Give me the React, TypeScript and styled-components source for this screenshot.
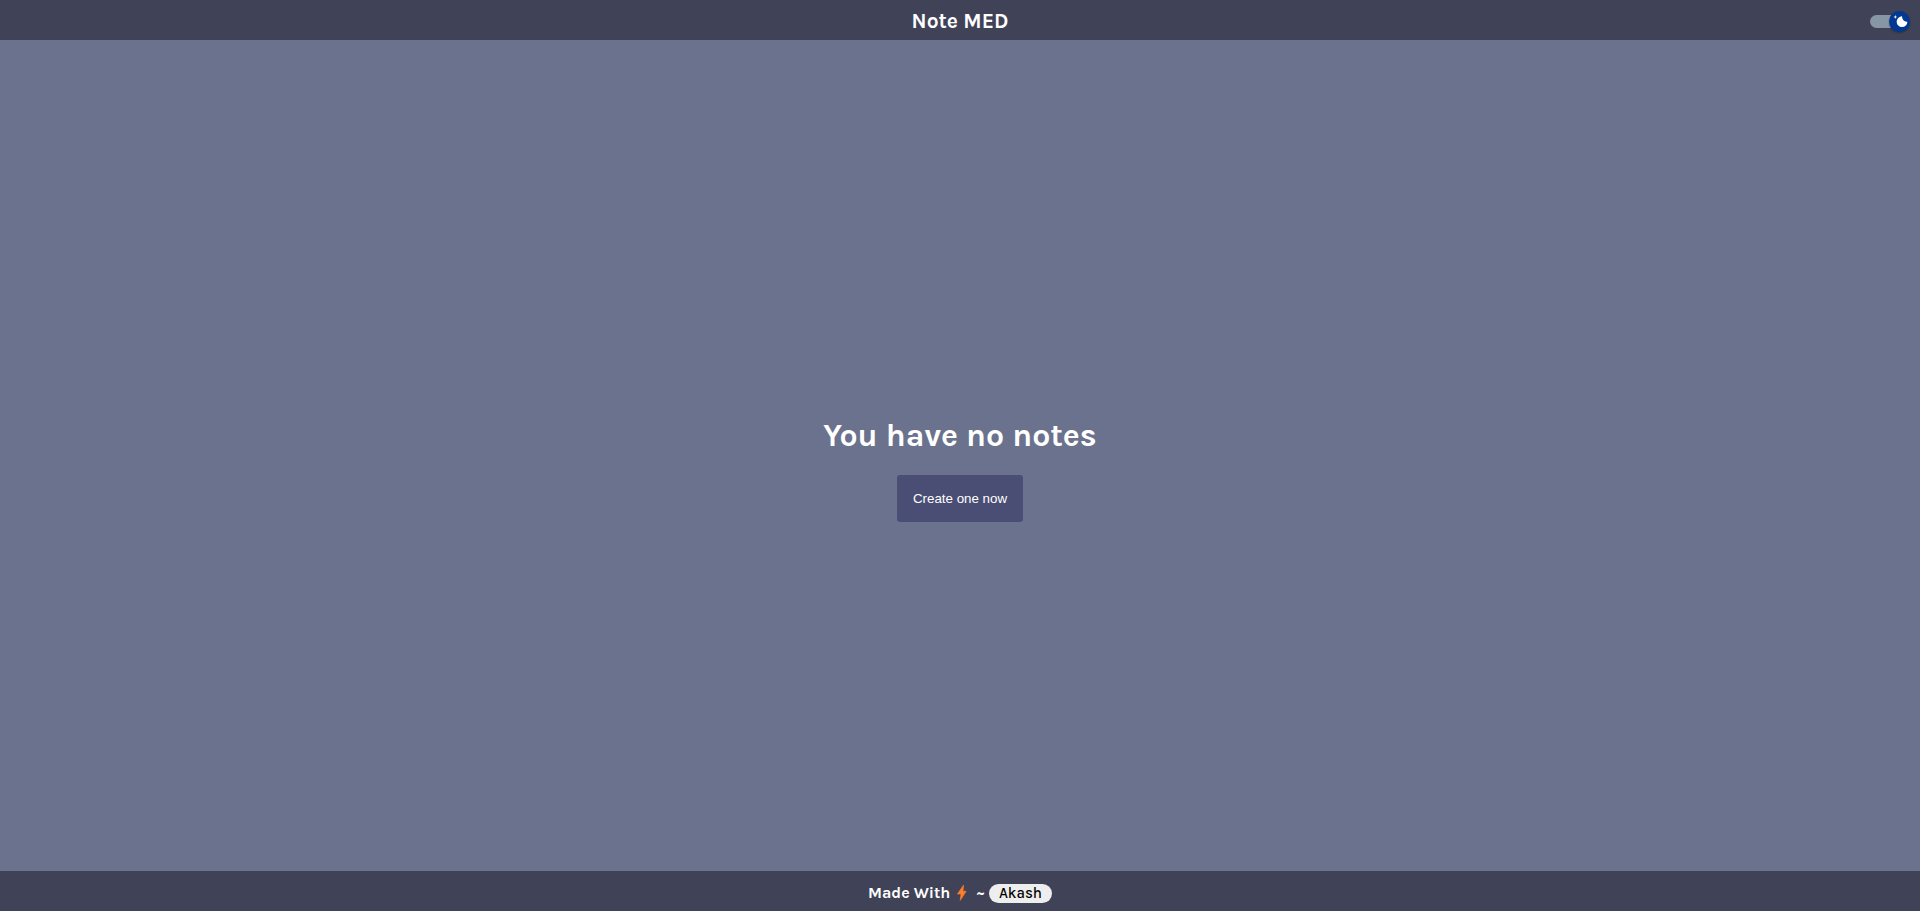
import React, { useState } from "react";
import styled, { createGlobalStyle } from "styled-components";

const sans = `Karla, "Inter", "Liberation Sans", sans-serif`;

const GlobalStyle = createGlobalStyle`
  * { box-sizing: border-box; }
  body { margin: 0; font-family: ${sans}; color: #fff; background: #6b728e; }
`;

const Page = styled.div`
  min-height: 100vh;
  display: grid;
  grid-template-rows: auto 1fr auto;
`;

const Header = styled.header`
  display: grid;
  grid-template-columns: 1fr auto 1fr;
  align-items: center;
  height: 40px;
  padding: 2px 10px 0;
  background: #404258;
`;

const Title = styled.h1`
  grid-column: 2;
  margin: 0;
  font-size: 21px;
  line-height: 24px;
  font-weight: 700;
`;

const Toggle = styled.label`
  position: relative;
  justify-self: end;
  display: flex;
  align-items: center;
  width: 40px;
  height: 21px;
  cursor: pointer;
`;

const ToggleInput = styled.input`
  position: absolute;
  inset: 0;
  margin: 0;
  opacity: 0;
`;

const Track = styled.span`
  display: flex;
  align-items: center;
  width: 31px;
  height: 13px;
  border-radius: 7px;
  background: #8796a5;
`;

const Thumb = styled.span<{ $on: boolean }>`
  display: flex;
  flex: none;
  align-items: center;
  justify-content: center;
  width: 21px;
  height: 21px;
  margin-left: ${(p) => (p.$on ? "19px" : "0")};
  border-radius: 50%;
  background: #003892;
  box-shadow: 0 1px 2px rgba(0, 0, 0, 0.3);
`;

const Main = styled.main`
  display: flex;
  flex-direction: column;
  align-items: center;
  justify-content: center;
  gap: 20px;
  padding-top: 28px;
`;

const Message = styled.h2`
  margin: 0;
  font-size: 32px;
  line-height: 38px;
  font-weight: 700;
`;

const CreateButton = styled.button`
  padding: 16px;
  border: 0;
  border-radius: 3px;
  background: #4a4e74;
  color: #fff;
  font-family: "Liberation Sans", sans-serif;
  cursor: pointer;
`;

const Footer = styled.footer`
  display: flex;
  align-items: center;
  justify-content: center;
  gap: 4px;
  height: 40px;
  padding-top: 4px;
  background: #404258;
  font-size: 16px;
  line-height: 18px;
  font-weight: 700;
`;

const Bolt = styled.svg`
  width: 16px;
  height: 18px;
  margin-right: 2px;
`;

const Author = styled.a`
  padding: 0 10px;
  border-radius: 10px;
  background: #eee;
  color: #000;
  font-size: 15px;
  line-height: 19px;
  font-weight: 500;
  text-decoration: none;
`;

function Moon() {
  return (
    <svg width="16" height="16" viewBox="0 0 20 20" aria-hidden="true">
      <path
        fill="#fff"
        d="M4.2 2.5l-.7 1.8-1.8.7 1.8.7.7 1.8.6-1.8L6.7 5l-1.9-.7-.6-1.8zm15 8.3a6.7 6.7 0 11-6.6-6.6 5.8 5.8 0 006.6 6.6z"
      />
    </svg>
  );
}

export default function App() {
  const [dark, setDark] = useState(true);
  return (
    <Page>
      <GlobalStyle />
      <Header>
        <Title>Note MED</Title>
        <Toggle>
          <ToggleInput
            type="checkbox"
            aria-label="Dark mode"
            checked={dark}
            onChange={() => setDark(!dark)}
          />
          <Track>
            <Thumb $on={dark}>
              <Moon />
            </Thumb>
          </Track>
        </Toggle>
      </Header>
      <Main>
        <Message>You have no notes</Message>
        <CreateButton type="button">Create one now</CreateButton>
      </Main>
      <Footer>
        <span>Made With</span>
        <Bolt viewBox="0 0 16 18" aria-hidden="true">
          <path
            fill="#fd7e2a"
            stroke="#fd7e2a"
            strokeWidth="0.6"
            strokeLinejoin="round"
            d="M9.6 1 L3.4 10 H7 L6.2 16.4 L12.2 7.2 H9 Z"
          />
        </Bolt>
        <span>~</span>
        <Author href="#akash">Akash</Author>
      </Footer>
    </Page>
  );
}
